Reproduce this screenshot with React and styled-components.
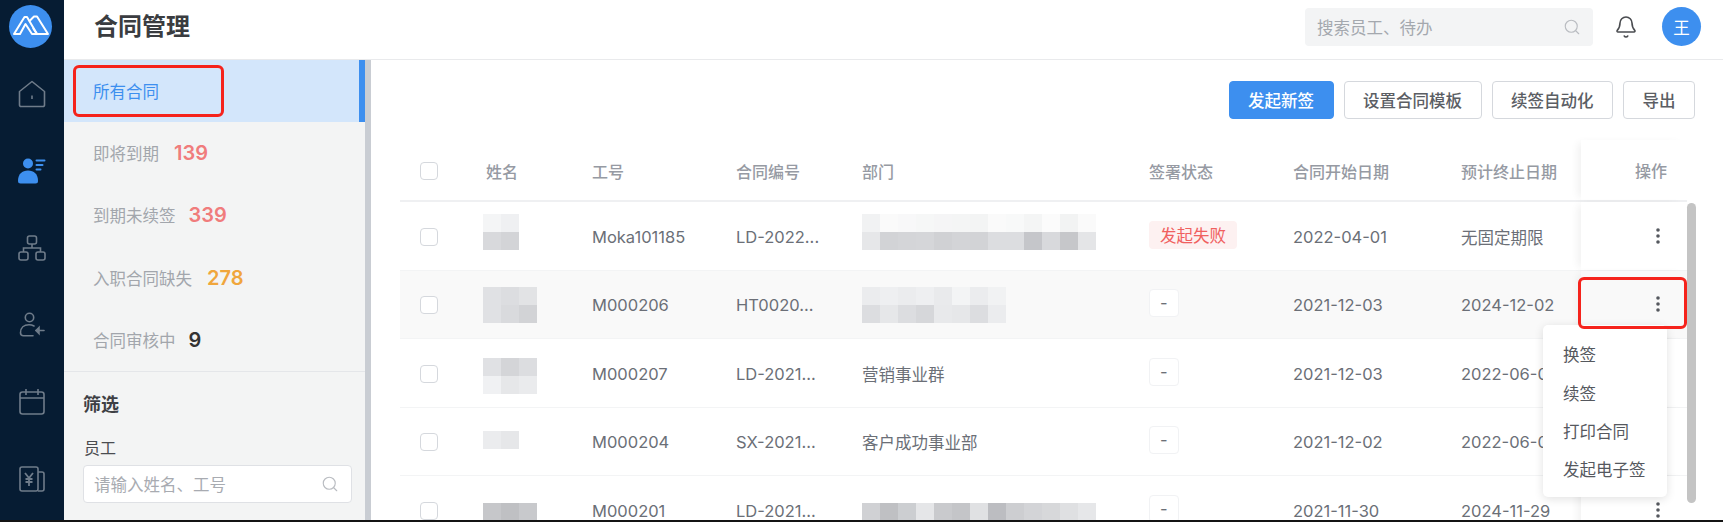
import React from "react";
import styled, { createGlobalStyle } from "styled-components";
import { Bell, Search } from "lucide-react";

const Global = createGlobalStyle`
  html, body { margin: 0; padding: 0; background: #fff; }
  body { font-family: Inter, "Noto Sans CJK SC", sans-serif; }
  * { box-sizing: border-box; }
`;

const Page = styled.div`
  display: flex;
  width: 1723px;
  height: 522px;
  overflow: hidden;
  border-bottom: 2px solid #141414;
`;

const Rail = styled.nav`
  flex: 0 0 64px;
  background: #061c33;
  padding-top: 5px;
`;

const Logo = styled.div`
  width: 43px;
  height: 43px;
  margin: 0 0 7px 9px;
  border-radius: 50%;
  background: #3d8fef;
`;

const RailItem = styled.div`
  height: 77px;
  display: flex;
  align-items: center;
  justify-content: center;
  color: ${(p) => (p.$active ? "#3d8fef" : "#6f7c8a")};
`;

const Content = styled.div`
  flex: 1;
  display: flex;
  flex-direction: column;
  min-width: 0;
`;

const Header = styled.header`
  flex: 0 0 60px;
  display: flex;
  align-items: center;
  padding: 0 22px 6px 30px;
  border-bottom: 1px solid #e9eaec;
`;

const Title = styled.h1`
  flex: 1;
  margin: 0 0 5px;
  font-size: 24px;
  font-weight: 600;
  color: #3a3c40;
`;

const GlobalSearch = styled.div`
  width: 288px;
  height: 38px;
  margin-right: 21px;
  padding: 0 12px;
  display: flex;
  align-items: center;
  justify-content: space-between;
  border-radius: 4px;
  background: #f3f4f5;
  color: #a4a8ae;
  font-size: 16.5px;
`;

const Avatar = styled.div`
  width: 39px;
  height: 39px;
  margin-left: 24px;
  border-radius: 50%;
  display: flex;
  align-items: center;
  justify-content: center;
  background: #3d8fef;
  color: #fff;
  font-size: 16.5px;
`;

const Body = styled.div`
  flex: 1;
  display: flex;
  min-height: 0;
`;

const Side = styled.aside`
  flex: 0 0 307px;
  position: relative;
  background: #f3f4f4;
  border-right: 6px solid #c9cdd3;
`;

const SideItem = styled.div`
  height: 62.2px;
  padding-left: 29px;
  display: flex;
  align-items: center;
  gap: 15px;
  font-size: 16.5px;
  color: ${(p) => (p.$active ? "#3d8fef" : "#a2a6ac")};
  background: ${(p) => (p.$active ? "#d3e6fb" : "transparent")};
  border-right: ${(p) => (p.$active ? "6px solid #3d8fef" : "none")};
`;

const Count = styled.span`
  margin-left: ${(p) => (p.$tight ? "-2px" : "0")};
  font-size: 20px;
  font-weight: 600;
  color: ${(p) => p.$color};
`;

const Filter = styled.div`
  padding: 20px 13px 0 19px;
  border-top: 1px solid #e4e6e9;
`;

const FilterTitle = styled.div`
  font-size: 18px;
  font-weight: 600;
  line-height: 26px;
  color: #3e4044;
`;

const FilterLabel = styled.div`
  margin-top: 18px;
  padding-left: 1px;
  font-size: 16px;
  line-height: 24px;
  color: #4a4c50;
`;

const FilterInput = styled.div`
  height: 38px;
  margin-top: 5px;
  padding: 0 12px 0 10px;
  display: flex;
  align-items: center;
  justify-content: space-between;
  background: #fff;
  border: 1px solid #dfe1e5;
  border-radius: 4px;
  color: #a8abb1;
  font-size: 16.5px;
`;

const Main = styled.main`
  flex: 1;
  position: relative;
  min-width: 0;
  overflow: hidden;
`;

const Toolbar = styled.div`
  display: flex;
  justify-content: flex-end;
  gap: 10px;
  padding: 21px 28px 0 0;
`;

const Button = styled.button`
  height: 38px;
  padding: 0 18.5px;
  border-radius: 4px;
  font: 500 16.5px Inter, "Noto Sans CJK SC", sans-serif;
  background: ${(p) => (p.$primary ? "#3d8fef" : "#fff")};
  color: ${(p) => (p.$primary ? "#fff" : "#5b5e64")};
  border: 1px solid ${(p) => (p.$primary ? "#3d8fef" : "#d5d8dd")};
`;

const Table = styled.div`
  margin: 21px 36px 0 29px;
`;

const Row = styled.div`
  display: grid;
  grid-template-columns: 66px 106px 144px 126px 287px 144px 168px 120px 106px;
  padding-left: 20px;
  height: ${(p) => (p.$head ? "62px" : "68.5px")};
  align-items: center;
  font-size: ${(p) => (p.$head ? "16px" : "16.5px")};
  color: ${(p) => (p.$head ? "#969aa3" : "#6b6f77")};
  font-weight: ${(p) => (p.$head ? 500 : 400)};
  background: ${(p) => (p.$hover ? "#f9f9f9" : "#fff")};
  border-bottom: ${(p) => (p.$head ? "2px solid #eff0f2" : "1px solid #f3f4f5")};
`;

const Cell = styled.span`
  padding-top: 2px;
`;

const Check = styled.span`
  width: 18px;
  height: 18px;
  margin-top: 2px;
  border: 1px solid #d5d8dd;
  border-radius: 4px;
  background: #fff;
`;

const Mosaic = styled.div`
  align-self: start;
  margin: ${(p) => p.$top}px 0 0 ${(p) => p.$left || 0}px;
  display: grid;
  grid-template-columns: repeat(${(p) => p.$cols}, 18px);
  grid-auto-rows: 18px;
`;

const Block = styled.span`
  background: ${(p) => p.$c};
`;

const Status = styled.span`
  justify-self: start;
  margin-top: -2px;
  height: 28px;
  padding: 0 ${(p) => (p.$fail ? "11px" : "10px")};
  display: flex;
  align-items: center;
  border-radius: 4px;
  font-size: 16.5px;
  background: ${(p) => (p.$fail ? "#fdf1f1" : "#fff")};
  color: ${(p) => (p.$fail ? "#f0605f" : "#6b6f77")};
  border: ${(p) => (p.$fail ? "none" : "1px solid #f1f2f4")};
`;

const ActionCell = styled.div`
  height: 100%;
  display: flex;
  align-items: center;
  justify-content: flex-end;
  padding-right: ${(p) => (p.$head ? "20px" : "27px")};
  background: ${(p) => (p.$hover ? "#f9f9f9" : "#fff")};
  box-shadow: -6px 0 8px -3px rgba(0, 0, 0, 0.06);
`;

const Scrollbar = styled.div`
  position: absolute;
  left: 1316px;
  top: 143px;
  width: 9px;
  height: 300px;
  border-radius: 5px;
  background: #c4c4c4;
`;

const Menu = styled.div`
  position: absolute;
  left: 1172px;
  top: 265px;
  width: 124px;
  height: 172px;
  padding: 10px 0 0 20px;
  background: #fff;
  border-radius: 5px;
  box-shadow: 0 2px 10px rgba(0, 0, 0, 0.12);
`;

const MenuItem = styled.div`
  height: 38.4px;
  display: flex;
  align-items: center;
  font-size: 16.5px;
  color: #55585e;
`;

const Highlight = styled.div`
  position: absolute;
  left: ${(p) => p.$left}px;
  top: ${(p) => p.$top}px;
  width: ${(p) => p.$width}px;
  height: 52px;
  border: 3px solid #f5231c;
  border-radius: 6px;
`;

const LogoMark = () => (
  <svg width="43" height="43" viewBox="0 0 43 43" fill="none" stroke="#fff" strokeWidth="2" strokeLinejoin="round">
    <path d="M5 29 L15.5 12 L18 12 L28 29 L23 29 L16.5 19 L11 29 Z" />
    <path d="M20 16.5 L25 11.5 L28 11.5 L39 29 L28 29 L24 23" />
  </svg>
);

const HomeIcon = () => (
  <svg width="28" height="28" viewBox="0 0 28 28" fill="none" stroke="currentColor" strokeWidth="1.6" strokeLinejoin="round">
    <path d="M1.5 11.5 L14 1.5 L26.5 11.5 V25 a1.5 1.5 0 0 1 -1.5 1.5 H3 a1.5 1.5 0 0 1 -1.5 -1.5 Z" />
    <path d="M14 15.5 V19" />
  </svg>
);

const PeopleIcon = () => (
  <svg width="28" height="26" viewBox="0 0 28 26" fill="currentColor">
    <circle cx="10" cy="5.5" r="5" />
    <path d="M0 23 c0 -7 4 -10.5 10 -10.5 s10 3.5 10 10.5 a2.5 2.5 0 0 1 -2.5 2.5 h-15 a2.5 2.5 0 0 1 -2.5 -2.5 Z" />
    <rect x="17.5" y="1.5" width="10" height="2" rx="1" />
    <rect x="17.5" y="6" width="8" height="2" rx="1" />
    <rect x="17.5" y="10.5" width="6" height="2" rx="1" />
  </svg>
);

const OrgIcon = () => (
  <svg width="28" height="26" viewBox="0 0 28 26" fill="none" stroke="currentColor" strokeWidth="1.6">
    <rect x="9.5" y="1" width="9" height="8" rx="2" />
    <rect x="1" y="17" width="9" height="8" rx="2" />
    <rect x="18" y="17" width="9" height="8" rx="2" />
    <path d="M14 9 V13 M5.5 17 V13 H22.5 V17" />
  </svg>
);

const OffboardIcon = () => (
  <svg width="26" height="26" viewBox="0 0 26 26" fill="none" stroke="currentColor" strokeWidth="1.6" strokeLinecap="round">
    <circle cx="10.5" cy="5.5" r="4.2" />
    <path d="M15 14 c-1.5 -0.8 -3 -1.2 -5 -1.2 c-5 0 -8.5 3 -8.5 8 c0 2 1 3 3 3 H14" />
    <path d="M17 18.5 H25" />
    <path d="M20 15.5 L17 18.5 L20 21.5 Z" fill="currentColor" />
  </svg>
);

const CalendarIcon = () => (
  <svg width="26" height="27" viewBox="0 0 26 27" fill="none" stroke="currentColor" strokeWidth="1.6">
    <rect x="1" y="4" width="24" height="22" rx="2.5" />
    <path d="M1 10 H25 M7 1 V7 M19 1 V7" />
  </svg>
);

const MoneyIcon = () => (
  <svg width="26" height="26" viewBox="0 0 26 26" fill="none" stroke="currentColor" strokeWidth="1.6">
    <rect x="1" y="1" width="18" height="24" rx="2" />
    <path d="M19 6 H23 a2 2 0 0 1 2 2 V23 a2 2 0 0 1 -2 2 H19" />
    <path d="M6 7 L10 12 L14 7 M10 12 V20 M6.5 13 H13.5 M6.5 16 H13.5" strokeWidth="1.8" />
  </svg>
);

const Dots = () => (
  <svg width="4" height="16" viewBox="0 0 4 16" fill="#55585e">
    <circle cx="2" cy="2" r="1.8" />
    <circle cx="2" cy="8" r="1.8" />
    <circle cx="2" cy="14" r="1.8" />
  </svg>
);

const rows = [
  {
    no: "Moka101185", code: "LD-2022...", start: "2022-04-01", end: "无固定期限", fail: true,
    name: { top: 12, cols: 2, left: -3, cells: ["#f4f5f6", "#eff0f2", "#d8d9dc", "#d3d4d7"] },
    dept: {
      top: 12, cols: 13,
      cells: ["#f1f2f3", "#fafafa", "#f8f8f9", "#f6f7f7", "#f5f5f6", "#f4f5f5", "#f3f4f4", "#fafafa", "#f8f9f9", "#f4f5f5", "#fbfbfb", "#f2f3f3", "#fafafa",
        "#e6e7e9", "#d2d3d6", "#d4d5d8", "#d5d6d9", "#d0d1d4", "#d3d4d7", "#d2d3d6", "#dcdde0", "#dcdde0", "#c5c6ca", "#d8d9dc", "#c6c7ca", "#e4e5e7"],
    },
  },
  {
    no: "M000206", code: "HT0020...", start: "2021-12-03", end: "2024-12-02", hover: true,
    name: { top: 16, cols: 3, left: -3, cells: ["#e0e1e4", "#dcdde0", "#e2e3e5", "#e0e1e4", "#d9dadd", "#d2d3d6"] },
    dept: {
      top: 16, cols: 8,
      cells: ["#ebecee", "#eeeff1", "#ebecee", "#eeeff1", "#e9eaec", "#f3f4f5", "#ebecee", "#f1f2f3",
        "#dcdde0", "#e6e7e9", "#dcdde0", "#d6d7da", "#e8e9eb", "#e6e7e9", "#dcdde0", "#ebecee"],
    },
  },
  {
    no: "M000207", code: "LD-2021...", start: "2021-12-03", end: "2022-06-02", deptText: "营销事业群",
    name: { top: 19, cols: 3, left: -3, cells: ["#e0e1e4", "#d4d5d8", "#dcdde0", "#f0f1f3", "#e6e7e9", "#eaebed"] },
  },
  {
    no: "M000204", code: "SX-2021...", start: "2021-12-02", end: "2022-06-02", deptText: "客户成功事业部",
    name: { top: 23, cols: 2, left: -3, cells: ["#ebecee", "#e6e7e9"] },
  },
  {
    no: "M000201", code: "LD-2021...", start: "2021-11-30", end: "2024-11-29",
    name: { top: 27, cols: 3, left: -3, cells: ["#c6c7ca", "#bfc0c3", "#c8c9cc"] },
    dept: {
      top: 27, cols: 13,
      cells: ["#d0d1d4", "#bfc0c3", "#ccced1", "#e5e6e8", "#c9cacd", "#c4c5c8", "#e0e1e3", "#bcbdc1", "#cdced1", "#d3d4d7", "#d7d8da", "#dfe0e2", "#e6e7e9"],
    },
  },
];

const Blur = ({ data }) => (
  <Mosaic $top={data.top} $left={data.left} $cols={data.cols}>
    {data.cells.map((c, i) => (
      <Block key={i} $c={c} />
    ))}
  </Mosaic>
);

export default function App() {
  return (
    <Page>
      <Global />
      <Rail>
        <Logo><LogoMark /></Logo>
        <RailItem><HomeIcon /></RailItem>
        <RailItem $active><PeopleIcon /></RailItem>
        <RailItem><OrgIcon /></RailItem>
        <RailItem><OffboardIcon /></RailItem>
        <RailItem><CalendarIcon /></RailItem>
        <RailItem><MoneyIcon /></RailItem>
      </Rail>
      <Content>
        <Header>
          <Title>合同管理</Title>
          <GlobalSearch>
            搜索员工、待办
            <Search size={18} strokeWidth={1.5} color="#b9bcc1" />
          </GlobalSearch>
          <Bell size={24} strokeWidth={1.6} color="#4a4c50" />
          <Avatar>王</Avatar>
        </Header>
        <Body>
          <Side>
            <SideItem $active>所有合同</SideItem>
            <SideItem>即将到期 <Count $color="#f07c7c">139</Count></SideItem>
            <SideItem>到期未续签 <Count $tight $color="#f07c7c">339</Count></SideItem>
            <SideItem>入职合同缺失 <Count $color="#f0a63c">278</Count></SideItem>
            <SideItem>合同审核中 <Count $tight $color="#333">9</Count></SideItem>
            <Filter>
              <FilterTitle>筛选</FilterTitle>
              <FilterLabel>员工</FilterLabel>
              <FilterInput>
                请输入姓名、工号
                <Search size={18} strokeWidth={1.5} color="#b9bcc1" />
              </FilterInput>
            </Filter>
            <Highlight $left={9} $top={5} $width={151} />
          </Side>
          <Main>
            <Toolbar>
              <Button $primary>发起新签</Button>
              <Button>设置合同模板</Button>
              <Button>续签自动化</Button>
              <Button>导出</Button>
            </Toolbar>
            <Table>
              <Row $head>
                <Check />
                <Cell>姓名</Cell>
                <Cell>工号</Cell>
                <Cell>合同编号</Cell>
                <Cell>部门</Cell>
                <Cell>签署状态</Cell>
                <Cell>合同开始日期</Cell>
                <Cell>预计终止日期</Cell>
                <ActionCell $head>操作</ActionCell>
              </Row>
              {rows.map((r) => (
                <Row key={r.no} $hover={r.hover}>
                  <Check />
                  <Blur data={r.name} />
                  <Cell>{r.no}</Cell>
                  <Cell>{r.code}</Cell>
                  {r.dept ? <Blur data={r.dept} /> : <Cell>{r.deptText}</Cell>}
                  <Status $fail={r.fail}>{r.fail ? "发起失败" : "-"}</Status>
                  <Cell>{r.start}</Cell>
                  <Cell>{r.end}</Cell>
                  <ActionCell $hover={r.hover}><Dots /></ActionCell>
                </Row>
              ))}
            </Table>
            <Scrollbar />
            <Menu>
              <MenuItem>换签</MenuItem>
              <MenuItem>续签</MenuItem>
              <MenuItem>打印合同</MenuItem>
              <MenuItem>发起电子签</MenuItem>
            </Menu>
            <Highlight $left={1207} $top={217} $width={109} />
          </Main>
        </Body>
      </Content>
    </Page>
  );
}
